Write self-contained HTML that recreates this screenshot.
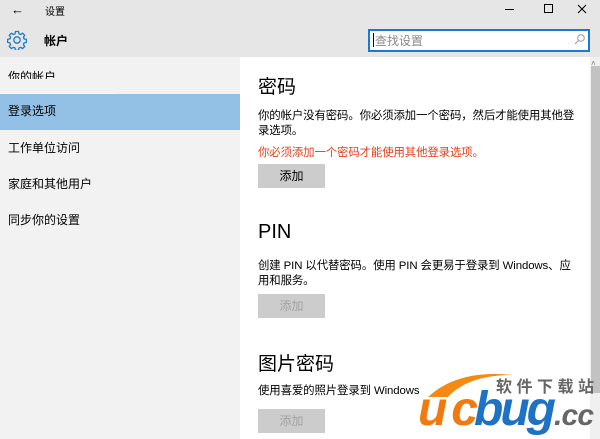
<!DOCTYPE html>
<html><head><meta charset="utf-8"><style>
*{margin:0;padding:0;box-sizing:border-box}
body{width:600px;height:439px;overflow:hidden;position:relative;background:#e6e6e6;font-family:"Liberation Sans","Noto Sans CJK SC",sans-serif;color:#000;font-size:12px}
.a{position:absolute;white-space:nowrap}
#side{position:absolute;left:0;top:57px;width:240px;height:382px;background:#f2f2f2}
#main{position:absolute;left:240px;top:57px;width:360px;height:382px;background:#fff}
.btn{position:absolute;left:18px;width:67px;height:24px;background:#cccccc;text-align:center;line-height:24px;font-size:12px}
.dis{color:#a3a3a3}
.p{font-size:11.4px;line-height:15px;letter-spacing:-0.1px}
</style></head><body>
<div class="a" style="left:11px;top:2px;font-size:13px">&#8592;</div>
<div class="a" style="left:45px;top:3px;font-size:10px">设置</div>
<div class="a" style="left:505px;top:9px;width:9px;height:1px;background:#000"></div>
<div class="a" style="left:544px;top:4px;width:9px;height:9px;border:1px solid #000"></div>
<svg class="a" style="left:577px;top:4px" width="10" height="10"><path d="M1 1L9 9M9 1L1 9" stroke="#000" stroke-width="1.1"/></svg>
<svg class="a" style="left:7px;top:30px" width="20" height="20" viewBox="0 0 20 20"><path d="M8.5 1.5h3l.5 2.3 1.6.7 2-1.3 2.1 2.1-1.3 2 .7 1.6 2.3.5v3l-2.3.5-.7 1.6 1.3 2-2.1 2.1-2-1.3-1.6.7-.5 2.3h-3l-.5-2.3-1.6-.7-2 1.3-2.1-2.1 1.3-2-.7-1.6-2.3-.5v-3l2.3-.5.7-1.6-1.3-2 2.1-2.1 2 1.3 1.6-.7z" fill="none" stroke="#1e79c9" stroke-width="1.3"/><circle cx="10" cy="10" r="3.2" fill="none" stroke="#1e79c9" stroke-width="1.3"/></svg>
<div class="a" style="left:44px;top:32px;font-size:12px;font-weight:bold">帐户</div>
<div class="a" style="left:368px;top:29px;width:222px;height:23px;background:#fff;border:2px solid #1b7ad0"></div>
<div class="a" style="left:375px;top:32px;font-size:12px;color:#888">查找设置</div>
<div class="a" style="left:373px;top:33px;width:1px;height:14px;background:#000"></div>
<svg class="a" style="left:574px;top:34px" width="11" height="11"><circle cx="7" cy="4" r="3.3" fill="none" stroke="#999"/><path d="M4.5 6.5L1 10" stroke="#999"/></svg>
<div id="side">
<div class="a" style="left:0;top:0;width:240px;height:22px;overflow:hidden"><div class="a" style="left:8px;top:11px">你的帐户</div></div>
<div class="a" style="left:0;top:36px;width:115px;height:1px;background:#fafafa"></div>
<div class="a" style="left:0;top:37px;width:240px;height:36px;background:#93c1e6"></div>
<div class="a" style="left:8px;top:45px">登录选项</div>
<div class="a" style="left:8px;top:82px">工作单位访问</div>
<div class="a" style="left:8px;top:118px">家庭和其他用户</div>
<div class="a" style="left:8px;top:154px">同步你的设置</div>
</div>
<div id="main">
<div class="a" style="left:18px;top:15px;font-size:19px">密码</div>
<div class="a p" style="left:18px;top:52px">你的帐户没有密码。你必须添加一个密码，然后才能使用其他登<br>录选项。</div>
<div class="a p" style="left:18px;top:89px;color:#e1401a">你必须添加一个密码才能使用其他登录选项。</div>
<div class="btn" style="top:107px">添加</div>
<div class="a" style="left:18px;top:164px;font-size:20px;font-family:'Liberation Sans',sans-serif">PIN</div>
<div class="a p" style="left:18px;top:202px">创建 PIN 以代替密码。使用 PIN 会更易于登录到 Windows、应<br>用和服务。</div>
<div class="btn dis" style="top:237px">添加</div>
<div class="a" style="left:18px;top:292px;font-size:19px">图片密码</div>
<div class="a p" style="left:18px;top:327px">使用喜爱的照片登录到 Windows</div>
<div class="btn dis" style="top:352px">添加</div>
<div class="a" style="left:350px;top:0;width:10px;height:382px;background:#f0f0f0"></div>
<div class="a" style="left:351px;top:2px;font-size:8px;color:#777">&#x2C4;</div>
<div class="a" style="left:351px;top:9px;width:9px;height:327px;background:#c2c2c2"></div>
<svg class="a" style="left:178px;top:300px" width="182" height="82" viewBox="0 0 182 82">
<path d="M10 40 Q40 12 95 18 Q50 18 30 40 Z" fill="#f48a12"/>
<text x="0" y="68" font-family="Liberation Sans,sans-serif" font-style="italic" font-weight="bold" font-size="48" fill="#f07a10" textLength="60">uc</text>
<text x="56" y="68" font-family="Liberation Sans,sans-serif" font-style="italic" font-weight="bold" font-size="48" fill="#1d72c4" textLength="82">bug</text>
<text x="136" y="68" font-family="Liberation Sans,sans-serif" font-style="italic" font-weight="bold" font-size="30" fill="#666" textLength="40">.cc</text>
<text x="78" y="35" font-family="Noto Sans CJK SC,sans-serif" font-weight="bold" font-size="16" fill="#666" textLength="98">软件下载站</text>
</svg>
</div>
</body></html>
